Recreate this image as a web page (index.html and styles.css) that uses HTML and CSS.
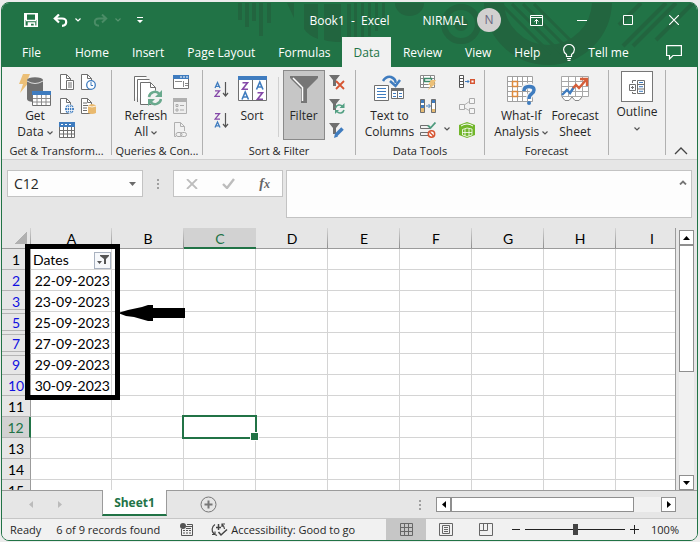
FILE: index.html
```
<!DOCTYPE html>
<html lang="en">
<head>
  <meta charset="UTF-8" />
  <meta name="viewport" content="width=device-width, initial-scale=1.0" />
  <title>Book1 - Excel</title>
  <link rel="stylesheet" href="styles.css">
</head>
<body>
  <svg class="defs" width="0" height="0">
    <symbol id="chev" viewBox="0 0 6 4"><path d="M.5 .5L3 3L5.500 .5" fill="none" stroke="currentColor" stroke-width="1.2"/></symbol>
    <symbol id="funnel" viewBox="0 0 16 16"><path d="M0 1H11L7 6V12H4V6Z" fill="#6f6f6f"/></symbol>
    <symbol id="page" viewBox="0 0 16 16"><path d="M10.500 15.500H1.500V.5H7.500L11.500 4.500V7" fill="#fff" stroke="#6f6f6f"/><path d="M7.500 .5V4.500H11.500" fill="none" stroke="#6f6f6f"/></symbol>
  </svg>

  <div class="window">
    <header class="top">
      <svg class="art" width="696" height="64" viewBox="0 0 696 64">
        <g fill="#22653f">
          <path d="M237 0h4v17h-4zM244 0h4v24h-4zM251 0h4v18h-4zM258 0h4v33h-4zM266 0h4v20h-4zM286 0h7v15z"/>
          <path d="M303 1h14v35q-9-3-14-10zM323 1h17v38q-10 0-17-2zM346 1h4v37l-4 1z"/>
          <path d="M353 0h3v34h-3zM360 0h3v34h-3zM367 0h3v33h-3zM374 0h3v28h-3zM381 0h3v22h-3z"/>
          <path d="M394 0h29a14.500 13 0 0 1-29 0z"/>
          <circle cx="460" cy="21" r="7"/>
        </g>
        <circle cx="460" cy="21" r="17" fill="none" stroke="#22653f" stroke-width="6"/>
        <circle cx="547" cy="-2" r="54" fill="none" stroke="#22653f" stroke-width="20"/>
        <path d="M500 1L550 51M511 1L560 50M522 1L568 47M533 1L576 44" stroke="#22653f" stroke-width="3"/>
        <path d="M618 22L640 0M622 43L665 0M632 43L675 0M655 37L692 0" stroke="#22653f" stroke-width="4"/>
      </svg>

      <div class="titlebar">
        <div class="quick">
          <button class="save" aria-label="Save"><svg width="14" height="14" viewBox="0 0 14 14"><path d="M.8 .8H13.200V13.200H.8ZM2 7.500H12M4.500 13V10H10.500V13" fill="none" stroke="#fff" stroke-width="1.600"/><path d="M1 1H3V7H1ZM11 1H13V7H11ZM5 10h2v3H5z" fill="#fff"/></svg></button>
          <button class="undo" aria-label="Undo"><svg width="15" height="13" viewBox="0 0 15 13"><path d="M6 .5L1.800 4.500L6 8.500M2 4.500H9Q13.200 4.500 13.200 8Q13.200 11.500 9 11.800" fill="none" stroke="#fff" stroke-width="2.200"/></svg></button>
          <button class="drop" aria-label="Undo list"><svg width="6" height="4"><use href="#chev"/></svg></button>
          <button class="redo" aria-label="Redo"><svg width="15" height="13" viewBox="0 0 15 13"><path d="M9 .5L13.200 4.500L9 8.500M13 4.500H6Q1.800 4.500 1.800 8Q1.800 11.500 6 11.800" fill="none" stroke="#4a8c66" stroke-width="2"/></svg></button>
          <button class="drop dim" aria-label="Redo list"><svg width="6" height="4"><use href="#chev"/></svg></button>
          <button class="custom" aria-label="Customize"><svg width="6" height="6" viewBox="0 0 6 6"><path d="M0 0H6V1H0ZM0 3H6L3 6Z" fill="#fff"/></svg></button>
        </div>
        <div class="title">Book1&nbsp; -&nbsp; Excel</div>
        <div class="account">
          <span>NIRMAL</span>
          <span class="avatar">N</span>
          <button class="winbtn" aria-label="Ribbon display"><svg width="13" height="11" viewBox="0 0 13 11"><path d="M.5 .5H12.500V10.500H.5ZM.5 2.500H12.500M6.500 9V4.500M4.500 6.500L6.500 4.500L8.500 6.500" fill="none" stroke="#fff"/></svg></button>
          <button class="winbtn" aria-label="Minimize"><svg width="10" height="11" viewBox="0 0 10 11"><path d="M0 5.500H10" stroke="#fff"/></svg></button>
          <button class="winbtn" aria-label="Maximize"><svg width="10" height="10" viewBox="0 0 10 10"><path d="M.5 .5H9.500V9.500H.5Z" fill="none" stroke="#fff"/></svg></button>
          <button class="winbtn" aria-label="Close"><svg width="10" height="10" viewBox="0 0 10 10"><path d="M0 0L10 10M10 0L0 10" stroke="#fff" stroke-width="1.200"/></svg></button>
        </div>
      </div>

      <nav class="tabs">
        <button class="tab file">File</button>
        <button class="tab">Home</button>
        <button class="tab">Insert</button>
        <button class="tab">Page Layout</button>
        <button class="tab">Formulas</button>
        <button class="tab active">Data</button>
        <button class="tab">Review</button>
        <button class="tab">View</button>
        <button class="tab">Help</button>
        <button class="tab tell"><svg width="12" height="17" viewBox="0 0 12 17"><path d="M3.500 12.500V10.500Q.6 8.500 .6 5.500A5.400 5 0 0 1 11.400 5.500Q11.400 8.500 8.500 10.500V12.500ZM4 14.500H8M4.500 16.400H7.500" fill="none" stroke="#fff" stroke-width="1.200"/></svg>Tell me</button>
        <button class="comment" aria-label="Comments"><svg width="16" height="15" viewBox="0 0 16 15"><path d="M.6 .6H15.400V10.500H7L3.500 14V10.500H.6Z" fill="none" stroke="#fff" stroke-width="1.200"/></svg></button>
      </nav>
    </header>

    <section class="ribbon">
      <div class="group get">
        <div class="tools">
          <button class="big">
            <svg width="34" height="32" viewBox="0 0 34 32"><path d="M5 0H12L9 7H12L2 19L5 10H1Z" fill="#ecc078"/><path d="M9 6V25Q9 28 17 28H25V6Z" fill="#6f6f6f"/><ellipse cx="17" cy="6" rx="8" ry="2.800" fill="#6f6f6f"/><path d="M9 7Q17 12 25 7" fill="none" stroke="#ddd"/><path d="M14.500 17.500H32.500V31.500H14.500Z" fill="#fff" stroke="#6f6f6f"/><path d="M14 17H33V21H14Z" fill="#3f7cbf"/><path d="M19 21V31M23.500 21V31M28 21V31M15 24.500H32M15 28H32" stroke="#8c8c8c"/></svg>
            <span>Get<br>Data <svg class="chev" width="6" height="4"><use href="#chev"/></svg></span>
          </button>
          <div class="small two">
            <button aria-label="From Text"><svg width="16" height="16" viewBox="0 0 16 16"><use href="#page"/><path d="M7.500 6.500H14.500V15.500H7.500Z" fill="#fff" stroke="#6f6f6f"/><path d="M9 9H13M9 11H13M9 13H13" stroke="#6f6f6f"/></svg></button>
            <button aria-label="Recent Sources"><svg width="16" height="16" viewBox="0 0 16 16"><use href="#page"/><circle cx="11" cy="11" r="4.300" fill="#fff" stroke="#3f7cbf" stroke-width="1.300"/><path d="M11 8V11.500H13" fill="none" stroke="#3f7cbf"/></svg></button>
            <button aria-label="From Web"><svg width="16" height="16" viewBox="0 0 16 16"><use href="#page"/><circle cx="10.500" cy="11" r="4.500" fill="#3f7cbf"/><path d="M6 9.500H15M6 12.500H15M10.500 7V15" stroke="#fff" stroke-width=".8"/><ellipse cx="10.500" cy="11" rx="2.200" ry="4.300" fill="none" stroke="#fff" stroke-width=".8"/></svg></button>
            <button aria-label="Existing Connections"><svg width="16" height="16" viewBox="0 0 16 16"><use href="#page"/><path d="M3 5H7M3 7.500H8M3 10H7M3 12.500H7" stroke="#6f6f6f"/><path d="M8 7.500Q12 4.500 16 7.500V15Q12 17 8 15Z" fill="#e9b96e"/><path d="M8 8Q12 10 16 8" stroke="#fff" fill="none" stroke-width=".8"/></svg></button>
            <button aria-label="From Table"><svg width="16" height="16" viewBox="0 0 16 16"><path d="M.5 .5H15.500V15.500H.5Z" fill="#fff" stroke="#6f6f6f"/><path d="M0 0H16V5H0Z" fill="#3f7cbf"/><path d="M2 2.500H4M6 2.500H8M10 2.500H12" stroke="#fff"/><path d="M4.500 5V15M8.500 5V15M12.500 5V15M0 8.500H16M0 12H16" stroke="#6f6f6f"/></svg></button>
          </div>
        </div>
        <div class="name">Get &amp; Transform...</div>
      </div>

      <div class="group queries">
        <div class="tools">
          <button class="big">
            <svg width="32" height="32" viewBox="0 0 32 32"><g fill="#fff" stroke="#6f6f6f"><path d="M4.500 27V2.500H16.500"/><path d="M7.500 28V5.500H19.500"/><path d="M10.500 30.500V8.500H20.500L25.500 13.500V30.500Z"/><path d="M20.500 8.500V13.500H25.500" fill="none"/></g><circle cx="25" cy="24" r="7.500" fill="#f1f1f1"/><g fill="none" stroke="#69a98d" stroke-width="2.500"><path d="M19 23A6 6 0 0 1 29.500 20"/><path d="M31 25A6 6 0 0 1 20.500 28"/></g><path d="M32 16V23H25ZM18 32V25H25Z" fill="#69a98d"/></svg>
            <span>Refresh<br>All <svg class="chev" width="6" height="4"><use href="#chev"/></svg></span>
          </button>
          <div class="small">
            <button aria-label="Queries"><svg width="16" height="16" viewBox="0 0 16 16"><path d="M.5 1.500H15.500V14.500H.5Z" fill="#fff" stroke="#6f6f6f"/><path d="M0 1H16V5H0Z" fill="#3f7cbf"/><path d="M7 3H9M10 3H12M13 3H15" stroke="#fff"/><path d="M10.500 7V13M12 9.500H15M12 11.500H15M2 7.500H9" stroke="#8a8a8a"/></svg></button>
            <button aria-label="Properties"><svg width="14" height="16" viewBox="0 0 14 16"><path d="M.5 .5H13.500V15.500H.5Z" fill="#eee" stroke="#b0b0b0"/><path d="M0 0H14V4H0Z" fill="#b0b0b0"/><path d="M3 6.500H5V8.500H3ZM3 11H5V13H3Z" fill="none" stroke="#aaa"/><path d="M7 7.500H11M7 12H11" stroke="#aaa"/></svg></button>
            <button aria-label="Edit Links"><svg width="14" height="16" viewBox="0 0 14 16"><path d="M3 14.500H1.500V.5H7.500L11.500 4.500V9M7.500 .5V4.500H11.500" fill="none" stroke="#b0b0b0"/><rect x="3" y="10.500" width="6" height="4" rx="2" fill="#f1f1f1" stroke="#aaa"/><rect x="7.500" y="10.500" width="6" height="4" rx="2" fill="none" stroke="#aaa"/></svg></button>
          </div>
        </div>
        <div class="name">Queries &amp; Con...</div>
      </div>

      <div class="group sortfilter">
        <div class="tools">
          <div class="small sorts">
            <button aria-label="Sort A to Z"><svg width="15" height="18" viewBox="0 0 15 18"><path d="M1 7L3.500 1.500L6 7M2 5.300H5" fill="none" stroke="#3f7cbf" stroke-width="1.300"/><path d="M1 9.800H5.500L1 15.300H6" fill="none" stroke="#8549a8" stroke-width="1.300"/><path d="M11.500 1V14M9 12L11.500 15L14 12" fill="none" stroke="#555" stroke-width="1.200"/></svg></button>
            <button aria-label="Sort Z to A"><svg width="15" height="18" viewBox="0 0 15 18"><path d="M1 1.700H5.500L1 7.200H6" fill="none" stroke="#8549a8" stroke-width="1.300"/><path d="M1 15.500L3.500 10L6 15.500M2 13.800H5" fill="none" stroke="#3f7cbf" stroke-width="1.300"/><path d="M11.500 1V14M9 12L11.500 15L14 12" fill="none" stroke="#555" stroke-width="1.200"/></svg></button>
          </div>
          <button class="big sort">
            <svg width="29" height="32" viewBox="0 0 29 32"><path d="M.5 2.500H28.500V26.500H.5Z" fill="#fff" stroke="#6f6f6f"/><path d="M0 2H29V6H0Z" fill="#3f7cbf"/><path d="M14.500 6V26" stroke="#6f6f6f"/><g fill="none" stroke-width="1.600"><path d="M4.500 8.800H9.500L4.500 15.200H10M19.500 18.800H24.500L19.500 25.200H25" stroke="#8549a8"/><path d="M4 25.500L7.200 18L10.500 25.500M5.500 23H9M18.500 15.500L21.800 8L25 15.500M20 13H23.500" stroke="#3f7cbf"/></g></svg>
            <span>Sort</span>
          </button>
          <div class="rule"></div>
          <button class="big filter">
            <svg width="28" height="32" viewBox="0 0 28 32"><path d="M0 2H28V4L17 15V29H11V15L0 4Z" fill="#767676"/><path d="M3 4L12.500 13.500V27" fill="none" stroke="#fff" stroke-width="1.500"/></svg>
            <span>Filter</span>
          </button>
          <div class="small">
            <button aria-label="Clear"><svg width="16" height="16" viewBox="0 0 16 16"><use href="#funnel"/><path d="M7 7L15 15M15 7L7 15" stroke="#d65532" stroke-width="1.800"/></svg></button>
            <button aria-label="Reapply"><svg width="16" height="16" viewBox="0 0 16 16"><use href="#funnel"/><path d="M6.500 10A4 4 0 0 1 13.500 8.500M15 12A4 4 0 0 1 8 13.500" fill="none" stroke="#53a083" stroke-width="1.600"/><path d="M15.500 5V10H10.500ZM6 16V12H10Z" fill="#53a083"/></svg></button>
            <button aria-label="Advanced"><svg width="16" height="16" viewBox="0 0 16 16"><use href="#funnel"/><path d="M7 13L13.500 6.500" stroke="#3f7cbf" stroke-width="3.500"/><path d="M5 16L6 11.500L9 14.500Z" fill="#3f7cbf"/></svg></button>
          </div>
        </div>
        <div class="name">Sort &amp; Filter</div>
      </div>

      <div class="group datatools">
        <div class="tools">
          <button class="big">
            <svg width="30" height="32" viewBox="0 0 30 32"><path d="M9 7Q12 2 17 3Q22 5 21.500 9" fill="none" stroke="#3f7cbf" stroke-width="2.500"/><path d="M16 7L21.500 12L26 6" fill="none" stroke="#3f7cbf" stroke-width="2.500"/><path d="M.5 11.500H14.500V26.500H.5Z" fill="#fff" stroke="#6f6f6f"/><path d="M3 14.500H12M3 17.500H12M3 20.500H12M3 23.500H12" stroke="#3f7cbf"/><path d="M17.500 14.500H29.500V24.500H17.500Z" fill="#fff" stroke="#6f6f6f"/><path d="M17 14H30V17H17Z" fill="#6f6f6f"/><path d="M23.500 16V24" stroke="#6f6f6f"/><path d="M19 19.500H22M25 19.500H28M19 22.500H22M25 22.500H28" stroke="#3f7cbf"/></svg>
            <span>Text to<br>Columns</span>
          </button>
          <div class="small">
            <button aria-label="Flash Fill"><svg width="16" height="16" viewBox="0 0 16 16"><path d="M.5 1.500H14.500V13.500H.5ZM.5 4.500H14.500M.5 10.500H14.500M3.500 1V13M10.500 1V4M10.500 10V13" fill="#fff" stroke="#8a8a8a"/><path d="M4.500 4.500H11.500V7.500H4.500Z" fill="#fff" stroke="#3b8a68" stroke-width="1.400"/><path d="M11 6H16L14 9.500H16L8 16L10.500 11H8Z" fill="#ecc078"/></svg></button>
            <button aria-label="Remove Duplicates"><svg width="16" height="14" viewBox="0 0 16 14"><path d="M.5 .5H4.500V13.500H.5ZM11.500 .5H15.500V13.500H11.500Z" fill="#3f7cbf" stroke="#6f6f6f"/><path d="M1 4H4V6H1ZM12 4H15V10H12Z" fill="#fff"/><path d="M1 9H4V13H1ZM12 10H15V13H12Z" fill="#e5ba73"/><path d="M6 7H10M8.500 5L10.500 7L8.500 9" fill="none" stroke="#3f7cbf"/></svg></button>
            <button class="validate" aria-label="Data Validation"><svg width="16" height="16" viewBox="0 0 16 16"><path d="M8 3.500H.5V6.500H10M8 10.500H.5V13.500H8" fill="none" stroke="#6f6f6f"/><path d="M8 3.500L10.500 6L15.500 .5" fill="none" stroke="#4e9b7e" stroke-width="1.800"/><circle cx="11.500" cy="12" r="3.200" fill="#fff" stroke="#d65532" stroke-width="1.500"/><path d="M9.500 10L13.500 14" stroke="#d65532" stroke-width="1.500"/></svg></button>
          </div>
          <svg class="chev low" width="6" height="4"><use href="#chev"/></svg>
          <div class="small">
            <button aria-label="Consolidate"><svg width="16" height="14" viewBox="0 0 16 14"><path d="M.5 .5H4.500V12.500H.5ZM.5 3.500H4.500M.5 6.500H4.500M.5 9.500H4.500" fill="#fff" stroke="#555"/><path d="M6 6.500H10M8.500 5L10 6.500L8.500 8" fill="none" stroke="#3f7cbf"/><path d="M11.700 4.700H15.300V8.300H11.700Z" fill="#fff" stroke="#d65532" stroke-width="1.400"/></svg></button>
            <button aria-label="Relationships"><svg width="16" height="16" viewBox="0 0 16 16"><path d="M4 8L11 3M4 9L11 13" stroke="#b3b3b3"/><path d="M.5 6.500H5.500V11.500H.5ZM10.500 .5H15.500V5.500H10.500ZM10.500 10.500H15.500V15.500H10.500Z" fill="#f5f5f5" stroke="#aaa"/></svg></button>
            <button aria-label="Data Model"><svg width="16" height="16" viewBox="0 0 16 16"><path d="M0 3L8 0L16 3V13L8 16L0 13Z" fill="#71b62a"/><path d="M2 4Q8 0 14 4" stroke="#fff" fill="none"/><path d="M3.500 7.500L8 6L13 7V13L8 14.500L3.500 13ZM3.500 10.500H13M6 7V14M10 6.500V14" fill="none" stroke="#fff" stroke-width=".8"/></svg></button>
          </div>
        </div>
        <div class="name">Data Tools</div>
      </div>

      <div class="group forecast">
        <div class="tools">
          <button class="big">
            <svg width="30" height="32" viewBox="0 0 30 32"><path d="M1.500 2.500H26.500V27.500H1.500ZM1.500 7.500H26.500M1.500 12.500H26.500M1.500 17.500H26.500M1.500 22.500H26.500M6.500 2V27M11.500 2V27M16.500 2V27M21.500 2V27" fill="#fff" stroke="#a0a0a0"/><path d="M6.500 7.500H11.500V12.500H6.500ZM6.500 17.500H11.500V22.500H6.500Z" fill="#fff" stroke="#dd8a3c" stroke-width="1.500"/><path d="M18 16Q18 12 23 12Q28 12 28 16Q28 18 25.500 20Q23 21.500 23 25" fill="none" stroke="#f1f1f1" stroke-width="6"/><path d="M18 17Q18 12.500 23 12.500Q28 12.500 28 16Q28 18 25.500 20Q23 21.500 23 25" fill="none" stroke="#3f7cbf" stroke-width="3.500"/><circle cx="23" cy="29" r="2" fill="#3f7cbf"/></svg>
            <span>What-If<br>Analysis <svg class="chev" width="6" height="4"><use href="#chev"/></svg></span>
          </button>
          <button class="big">
            <svg width="28" height="32" viewBox="0 0 28 32"><path d="M.5 2.500H27.500V22.500H.5ZM.5 7.500H27.500M.5 12.500H27.500M.5 17.500H27.500M7.500 2V22M14.500 2V22M21.500 2V22" fill="#fff" stroke="#a8a8a8"/><path d="M1 23L4 26.500H8L11 23L14 26.500H18L21 23" fill="#fff" stroke="#888"/><path d="M1 21L6 16L9 19L13 13" fill="none" stroke="#3f7cbf" stroke-width="2.400"/><path d="M12 14L15 11L18 14L25 6" fill="none" stroke="#d65f3a" stroke-width="2.400"/><path d="M19 5H26V12" fill="none" stroke="#d65f3a" stroke-width="2.400"/></svg>
            <span>Forecast<br>Sheet</span>
          </button>
        </div>
        <div class="name">Forecast</div>
      </div>

      <div class="group outline">
        <button class="big">
          <span class="frame"><svg width="17" height="14" viewBox="0 0 17 14"><path d="M.5 4.500H6.500V10.500H.5ZM2 7.500H5M3.500 6V9M3.500 3V.5H7M3.500 12V13.500H7" fill="none" stroke="#6f6f6f"/><path d="M8.500 .5H15.500V13.500H8.500Z" fill="#fff" stroke="#6f6f6f"/><path d="M8.500 4.500H15.500M8.500 9H15.500" stroke="#6f6f6f"/><path d="M10 2.500H14M10 6.700H14M10 11.300H14" stroke="#3f7cbf"/></svg></span>
          <span>Outline<br><svg class="chev" width="6" height="4"><use href="#chev"/></svg></span>
        </button>
      </div>

      <button class="collapse" aria-label="Collapse the ribbon"><svg width="14" height="8" viewBox="0 0 14 8"><path d="M1 7L7 1L13 7" fill="none" stroke="#444" stroke-width="1.300"/></svg></button>
    </section>

    <section class="formula">
      <div class="namebox">
        <input type="text" value="C12" aria-label="Name box" />
        <button aria-label="Names"><svg width="7" height="4" viewBox="0 0 7 4"><path d="M0 0H7L3.500 4Z" fill="#6a6a6a"/></svg></button>
      </div>
      <span class="dots"></span>
      <div class="fxbox">
        <button aria-label="Cancel"><svg width="12" height="10" viewBox="0 0 12 10"><path d="M1 0L11 10M11 0L1 10" stroke="#bdbdbd" stroke-width="1.800"/></svg></button>
        <button aria-label="Enter"><svg width="13" height="11" viewBox="0 0 13 11"><path d="M1 6L5 10L12 1" fill="none" stroke="#bdbdbd" stroke-width="2.400"/></svg></button>
        <button class="fx" aria-label="Insert function">f<sub>x</sub></button>
      </div>
      <div class="entry">
        <textarea aria-label="Formula bar"></textarea>
        <button aria-label="Collapse formula bar"><svg width="8" height="5" viewBox="0 0 8 5"><path d="M1 4.500L4 1.500L7 4.500" fill="none" stroke="#777" stroke-width="1.800"/></svg></button>
      </div>
    </section>

    <main class="sheet">
      <div class="grid">
        <table>
          <colgroup><col class="nums"><col class="wide"><col span="8"></colgroup>
          <thead>
            <tr><th class="corner"></th><th>A</th><th>B</th><th class="on">C</th><th>D</th><th>E</th><th>F</th><th>G</th><th>H</th><th>I</th></tr>
          </thead>
          <tbody>
            <tr><th>1</th><td class="head"><div>Dates<button aria-label="Filter dates"><svg width="12" height="10" viewBox="0 0 12 10"><path d="M3 0H12V1L9 4V9H7V4L3 1ZM0 6H5L2.500 9Z" fill="#555"/></svg></button></div></td><td></td><td></td><td></td><td></td><td></td><td></td><td></td><td></td></tr>
            <tr class="hit"><th>2</th><td>22-09-2023</td><td></td><td></td><td></td><td></td><td></td><td></td><td></td><td></td></tr>
            <tr class="hit cut"><th>3</th><td>23-09-2023</td><td></td><td></td><td></td><td></td><td></td><td></td><td></td><td></td></tr>
            <tr class="hit after cut"><th>5</th><td>25-09-2023</td><td></td><td></td><td></td><td></td><td></td><td></td><td></td><td></td></tr>
            <tr class="hit after cut"><th>7</th><td>27-09-2023</td><td></td><td></td><td></td><td></td><td></td><td></td><td></td><td></td></tr>
            <tr class="hit after"><th>9</th><td>29-09-2023</td><td></td><td></td><td></td><td></td><td></td><td></td><td></td><td></td></tr>
            <tr class="hit"><th>10</th><td>30-09-2023</td><td></td><td></td><td></td><td></td><td></td><td></td><td></td><td></td></tr>
            <tr><th>11</th><td></td><td></td><td></td><td></td><td></td><td></td><td></td><td></td><td></td></tr>
            <tr><th class="on">12</th><td></td><td></td><td class="selected"></td><td></td><td></td><td></td><td></td><td></td><td></td></tr>
            <tr><th>13</th><td></td><td></td><td></td><td></td><td></td><td></td><td></td><td></td><td></td></tr>
            <tr><th>14</th><td></td><td></td><td></td><td></td><td></td><td></td><td></td><td></td><td></td></tr>
            <tr><th>15</th><td></td><td></td><td></td><td></td><td></td><td></td><td></td><td></td><td></td></tr>
          </tbody>
        </table>
      </div>
      <div class="vscroll">
        <button aria-label="Scroll up"><svg width="7" height="4" viewBox="0 0 7 4"><path d="M0 4H7L3.500 0Z"/></svg></button>
        <div class="thumb"></div>
        <div class="track"></div>
        <button aria-label="Scroll down"><svg width="7" height="4" viewBox="0 0 7 4"><path d="M0 0H7L3.500 4Z"/></svg></button>
      </div>
      <div class="marker"></div>
      <svg class="arrow" width="67" height="16" viewBox="0 0 67 16"><path d="M0 8L10 5L24 2L30 0H35V3H67V13H35V16H30L16 12L8 11Z"/></svg>
    </main>

    <div class="sheets">
      <button class="nav" aria-label="Previous sheet"><svg width="4" height="7" viewBox="0 0 4 7"><path d="M4 0V7L0 3.500Z" fill="#bbb"/></svg></button>
      <button class="nav" aria-label="Next sheet"><svg width="4" height="7" viewBox="0 0 4 7"><path d="M0 0V7L4 3.500Z" fill="#bbb"/></svg></button>
      <button class="sheettab">Sheet1</button>
      <button class="add" aria-label="New sheet"><svg width="17" height="17" viewBox="0 0 17 17"><circle cx="8.500" cy="8.500" r="7.500" fill="none" stroke="#777"/><path d="M8.500 4.500V12.500M4.500 8.500H12.500" stroke="#777" stroke-width="2"/></svg></button>
      <span class="dots"></span>
      <div class="hscroll">
        <button aria-label="Scroll left"><svg width="4" height="7" viewBox="0 0 4 7"><path d="M4 0V7L0 3.500Z"/></svg></button>
        <div class="thumb"></div>
        <div class="track"></div>
        <button aria-label="Scroll right"><svg width="4" height="7" viewBox="0 0 4 7"><path d="M0 0V7L4 3.500Z"/></svg></button>
      </div>
    </div>

    <footer class="status">
      <span class="ready">Ready</span>
      <span class="found">6 of 9 records found</span>
      <svg class="macro" width="13" height="13" viewBox="0 0 13 13"><path d="M1.500 6V12.500H12.500V1.500H7" fill="none" stroke="#555"/><path d="M6 3.500H12M3 7.500H5M6 7.500H8M9 7.500H11M3 10H5M6 10H8M9 10H11M6 5.500H11" stroke="#555"/><circle cx="3" cy="3" r="3" fill="#555"/></svg>
      <svg class="access" width="17" height="14" viewBox="0 0 17 14"><path d="M4 1.500A6 6 0 0 0 3 11L6 12.500M1 11.500H4V8.500M11 1.500A6 6 0 0 1 13.500 6M14 1H11V4" fill="none" stroke="#444" stroke-width="1.200"/><path d="M7.500 1V7M5 4.500H10M7.500 9L10 12L16 6.500" fill="none" stroke="#444" stroke-width="1.500"/></svg>
      <span>Accessibility: Good to go</span>
      <div class="views">
        <button class="on" aria-label="Normal"><svg width="13" height="13" viewBox="0 0 13 13"><path d="M.5 .5H12.500V12.500H.5ZM4.500 0V13M8.500 0V13M0 4.500H13M0 8.500H13" fill="none" stroke="#666"/></svg></button>
        <button aria-label="Page Layout view"><svg width="14" height="13" viewBox="0 0 14 13"><path d="M.5 .5H13.500V12.500H.5ZM3.500 2.500H10.500V10.500H3.500ZM5 4.500H9M5 6.500H9M5 8.500H9" fill="none" stroke="#666"/></svg></button>
        <button aria-label="Page Break view"><svg width="14" height="13" viewBox="0 0 14 13"><path d="M.5 .5H13.500V12.500H.5ZM.5 7.500H8.500V.5M4.500 .5V7.500" fill="none" stroke="#666"/></svg></button>
      </div>
      <div class="zoom">
        <button aria-label="Zoom out"><svg width="8" height="9" viewBox="0 0 8 9"><path d="M0 4.500H8" stroke="#222"/></svg></button>
        <input type="range" min="0" max="200" value="100" aria-label="Zoom" />
        <button aria-label="Zoom in"><svg width="9" height="9" viewBox="0 0 9 9"><path d="M0 4.500H9M4.500 0V9" stroke="#222"/></svg></button>
        <span class="percent">100%</span>
      </div>
    </footer>
  </div>
</body>
</html>
```
FILE: styles.css
```
* {
  box-sizing: border-box;
}

body {
  margin: 0;
  padding: 2px 2px 1px 1px;
  height: 100vh;
  background: #ececec;
  font-family: "Open Sans", "Noto Sans", sans-serif;
  font-size: 12px;
  color: #262626;
  overflow: hidden;
}

button, input, textarea {
  font: inherit;
  color: inherit;
  margin: 0;
  padding: 0;
  border: 0;
  background: none;
}

button svg {
  display: block;
}

.defs {
  position: absolute;
}

.window {
  height: 100%;
  display: flex;
  flex-direction: column;
  border: 1px solid #217346;
  border-radius: 8px;
  overflow: hidden;
  background: #e6e6e6;
}

/* title bar and tabs */
.top {
  position: relative;
  background: #217346;
  color: #fff;
}

.art {
  position: absolute;
  top: 0;
  right: 0;
}

.titlebar {
  position: relative;
  display: grid;
  grid-template-columns: 1fr auto 1fr;
  align-items: center;
  height: 34px;
}

.quick {
  display: flex;
  align-items: center;
  padding-left: 22px;
}

.undo {
  margin-left: 15px;
}

.redo {
  margin-left: 12px;
}

.drop {
  margin-left: 7px;
}

.dim {
  color: #56936f;
}

.custom {
  margin-left: 16px;
}

.account {
  display: flex;
  align-items: center;
  justify-content: flex-end;
}

.avatar {
  width: 24px;
  height: 24px;
  margin: 0 12px 0 10px;
  border-radius: 50%;
  background: #d2d0d0;
  color: #6b6780;
  line-height: 24px;
  text-align: center;
}

.winbtn {
  width: 46px;
  height: 32px;
  display: flex;
  align-items: center;
  justify-content: center;
}

.tabs {
  position: relative;
  display: flex;
  height: 30px;
}

.tab {
  padding: 0 11px 0 12px;
}

.file {
  padding: 0 22px 0 20px;
}

.active {
  background: #f1f1f1;
  color: #217346;
}

.tell {
  display: flex;
  align-items: center;
  gap: 13px;
}

.comment {
  margin-left: auto;
  padding-right: 15px;
}

/* ribbon */
.ribbon {
  display: flex;
  height: 93px;
  padding: 3px 0 0;
  background: #f1f1f1;
  border-bottom: 1px solid #d0d0d0;
}

.group {
  display: flex;
  flex-direction: column;
  height: 85px;
  border-right: 1px solid #b1b1b1;
  white-space: nowrap;
}

.get {
  width: 110px;
}

.queries {
  width: 91px;
}

.sortfilter {
  width: 153px;
}

.datatools {
  width: 129px;
}

.forecast {
  width: 124px;
}

.outline {
  width: 57px;
}

.tools {
  display: flex;
  flex: none;
  justify-content: center;
  align-items: flex-start;
  height: 73px;
}

.name {
  line-height: 16px;
  font-size: 11px;
  text-align: center;
}

.big {
  display: flex;
  flex-direction: column;
  align-items: center;
  padding-top: 4px;
  line-height: 16px;
}

.big > span {
  margin-top: 2px;
}

.chev {
  display: inline-block !important;
  vertical-align: middle;
  color: #555;
}

.small {
  display: grid;
  grid-auto-rows: 24px;
  align-items: center;
  margin-left: 6px;
}

.two {
  grid-template-columns: 16px 16px;
  column-gap: 5px;
}

.sorts {
  grid-auto-rows: 31px;
  margin: 4px 9px 0 0;
}

.sortfilter .small:last-child {
  margin-left: 4px;
}

.rule {
  align-self: center;
  width: 1px;
  height: 60px;
  margin-left: 11px;
  background: #d0d0d0;
}

.filter {
  height: 70px;
  width: 42px;
  margin-left: 4px;
  padding-top: 3px;
  background: #c6c6c6;
  border: 1px solid #8a8a8a;
}

.low {
  align-self: flex-end;
  margin: 0 3px 12px 8px;
}

.forecast .tools {
  gap: 3px;
}

.outline .big {
  padding-top: 1px;
  text-align: center;
}

.frame {
  width: 32px;
  height: 31px;
  display: flex;
  align-items: center;
  justify-content: center;
  background: #fff;
  border: 1px solid #777;
}

.outline .big > .frame {
  margin-top: 0;
}

.collapse {
  align-self: flex-end;
  margin: 0 9px 4px auto;
}

/* formula bar */
.formula {
  display: flex;
  align-items: flex-start;
  padding: 10px 5px;
}

.namebox, .fxbox {
  display: flex;
  align-items: center;
  height: 27px;
  background: #fdfdfd;
  border: 1px solid #c3c3c3;
}

.namebox {
  width: 136px;
  font-size: 14px;
}

.namebox input {
  width: 100%;
  padding-left: 6px;
}

.namebox button {
  padding-right: 6px;
}

.dots {
  width: 2px;
  height: 10px;
  margin: 9px 14px;
  background: repeating-linear-gradient(#a0a0a0 0 2px, transparent 2px 4px);
}

.fxbox {
  width: 110px;
  justify-content: space-between;
  padding: 0 12px;
}

.fx {
  font: italic bold 14px "Liberation Serif", serif;
  color: #666;
}

.fx sub {
  font-size: 12px;
  vertical-align: baseline;
}

.entry {
  flex: 1;
  display: flex;
  align-items: flex-start;
  height: 48px;
  margin-left: 3px;
  background: #fdfdfd;
  border: 1px solid #c3c3c3;
}

.entry textarea {
  flex: 1;
  height: 100%;
  resize: none;
}

.entry button {
  padding: 9px 4px;
}

/* cells */
.sheet {
  position: relative;
  flex: 1;
  min-height: 0;
  display: flex;
  border-bottom: 1px solid #9b9b9b;
}

.grid {
  flex: 1;
  min-width: 0;
  overflow: hidden;
  border-right: 1px solid #9b9b9b;
}

table {
  width: 686px;
  table-layout: fixed;
  border-collapse: separate;
  border-spacing: 0;
  font: 14px Lato, sans-serif;
  color: #000;
}

.nums {
  width: 29px;
}

.wide {
  width: 81px;
}

th, td {
  height: 21px;
  padding: 2px 0 0;
  line-height: 18px;
}

th {
  font-weight: normal;
  background: #e6e6e6;
  border-bottom: 1px solid #b5b5b5;
}

thead th {
  border-bottom-color: #9b9b9b;
  background: linear-gradient(#d4d4d4, #8f8f8f) right / 1px 100% no-repeat #e6e6e6;
}

tbody th {
  border-right: 1px solid #9b9b9b;
}

thead .corner {
  background: linear-gradient(135deg, transparent 50%, #b1b1b1 50%) 13px 4px / 12px 12px no-repeat, linear-gradient(#d4d4d4, #8f8f8f) right / 1px 100% no-repeat #e6e6e6;
}

td {
  background: #fff;
  border-right: 1px solid #d4d4d4;
  border-bottom: 1px solid #d4d4d4;
}

thead .on {
  background: #d2d2d2;
  color: #217346;
  border-bottom: 2px solid #217346;
  line-height: 17px;
}

tbody .on {
  background: #d2d2d2;
  color: #217346;
  border-right: 2px solid #217346;
}

.hit th {
  color: #1010e0;
}

.hit td:nth-child(2) {
  text-align: right;
  padding-right: 1px;
}

/* double line where rows are filtered out */
.cut th {
  background: linear-gradient(#b5b5b5, #b5b5b5) 0 18px / 100% 1px no-repeat #e6e6e6;
  border-bottom-color: #e6e6e6;
}

.after th {
  background: linear-gradient(#b5b5b5, #b5b5b5) 0 1px / 100% 1px no-repeat #e6e6e6;
}

.after.cut th {
  background: linear-gradient(#b5b5b5, #b5b5b5) 0 1px / 100% 1px no-repeat, linear-gradient(#b5b5b5, #b5b5b5) 0 18px / 100% 1px no-repeat #e6e6e6;
}

.head div {
  display: flex;
  align-items: center;
  justify-content: space-between;
  height: 18px;
  padding-left: 2px;
}

.head button {
  width: 17px;
  height: 17px;
  padding: 2px;
  background: #f6f8fb;
  border: 1px solid #a9b2c0;
}

.selected {
  position: relative;
}

.selected::before {
  content: "";
  position: absolute;
  inset: -2px;
  border: 2px solid #217346;
}

.selected::after {
  content: "";
  position: absolute;
  right: -4px;
  bottom: -4px;
  width: 7px;
  height: 7px;
  background: #217346;
  border: 1px solid #fff;
}

.vscroll {
  display: flex;
  flex-direction: column;
  width: 15px;
  margin: 2px 3px 0;
}

.vscroll button, .hscroll button {
  width: 15px;
  height: 15px;
  display: flex;
  align-items: center;
  justify-content: center;
  background: #fff;
  border: 1px solid #8f8f8f;
}

.thumb {
  background: #fff;
  border: 1px solid #8f8f8f;
}

.track {
  background: #f1f1f1;
}

.vscroll .thumb {
  flex: 127;
}

.vscroll .track {
  flex: 104;
}

.marker {
  position: absolute;
  left: 23px;
  top: 16px;
  width: 95px;
  height: 156px;
  border: 5px solid #000;
}

.arrow {
  position: absolute;
  left: 116px;
  top: 77px;
}

/* sheet tabs */
.sheets {
  display: flex;
  align-items: center;
  height: 27px;
  padding-right: 21px;
}

.nav {
  width: 29px;
  display: flex;
  justify-content: center;
}

.nav:first-child {
  margin-left: 14px;
}

.sheettab {
  align-self: flex-start;
  width: 65px;
  height: 26px;
  margin: -1px 33px 0 28px;
  position: relative;
  background: #fff;
  border: 1px solid #9b9b9b;
  border-width: 0 1px 2px;
  border-bottom-color: #217346;
  color: #217346;
  font-weight: bold;
}

.sheets .dots {
  margin: 0 15px 0 auto;
}

.hscroll {
  display: flex;
  width: 240px;
}

.hscroll .thumb {
  flex: 183;
}

.hscroll .track {
  flex: 27;
}

/* status bar */
.status {
  display: flex;
  align-items: center;
  height: 22px;
  padding-left: 8px;
  background: #f1f1f1;
  border-top: 1px solid #c6c6c6;
  font-size: 11px;
  white-space: nowrap;
}

.found {
  margin-left: 15px;
}

.macro {
  margin: 0 18px 0 20px;
}

.access {
  margin-right: 3px;
}

.views {
  display: flex;
  align-self: stretch;
  margin-left: auto;
}

.views button {
  width: 40px;
  display: flex;
  align-items: center;
  justify-content: center;
}

.views .on {
  background: #c6c6c6;
}

.zoom {
  display: flex;
  align-items: center;
  padding: 0 18px 0 6px;
}

.zoom input {
  width: 100px;
  height: 12px;
  margin: 0 5px;
  appearance: none;
  background: linear-gradient(#222, #222) center / 100% 1px no-repeat;
}

.zoom input::-webkit-slider-thumb {
  appearance: none;
  width: 5px;
  height: 11px;
  background: #444;
}

.percent {
  margin-left: 12px;
}
```
